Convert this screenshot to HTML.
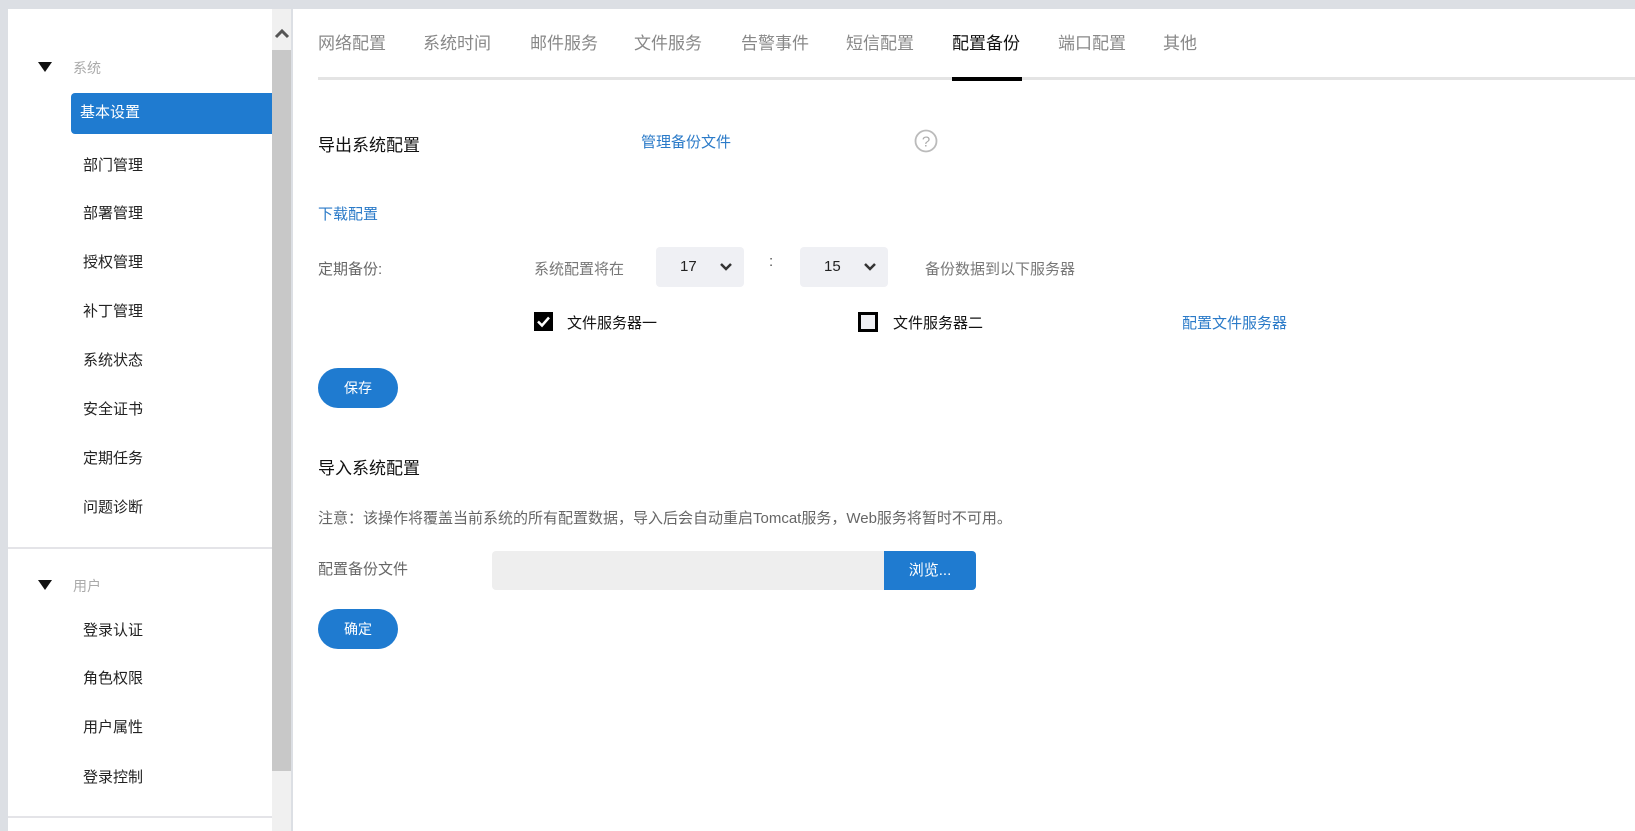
<!DOCTYPE html>
<html><head><meta charset="utf-8"><style>
*{margin:0;padding:0;box-sizing:border-box}
body{width:1635px;height:831px;overflow:hidden;background:#dcdfe4;font-family:"Liberation Sans","Noto Sans CJK SC",sans-serif;position:relative;font-size:15px;color:#333}
.a{position:absolute;white-space:nowrap}
#side{position:absolute;left:8px;top:9px;width:264px;height:822px;background:#fff}
#sb{position:absolute;left:272px;top:9px;width:19px;height:822px;background:#f0f0f0}
#thumb{position:absolute;left:272px;top:50px;width:19px;height:721px;background:#c8c8c8}
#main{position:absolute;left:293px;top:9px;width:1342px;height:822px;background:#fff}
.mi{position:absolute;left:83px;font-size:15px;color:#222;line-height:20px}
.tri{position:absolute;width:0;height:0;border-left:7px solid transparent;border-right:7px solid transparent;border-top:10px solid #111}
.tab{position:absolute;top:33px;font-size:17px;color:#888;line-height:22px}
.blue{color:#2a7ac8}
.btn{position:absolute;background:#1f7bd0;color:#fff;border-radius:20px;text-align:center;font-size:14px}
.sel{position:absolute;background:#eff0f4;border-radius:4px;width:88px;height:40px;top:247px}
.sel span{position:absolute;left:24px;top:11px;font-size:15px;color:#222}
.sel svg{position:absolute;left:64px;top:15px}
</style></head><body>
<div id="side"></div>
<div id="sb"></div><div id="thumb"></div>
<svg class="a" style="left:274px;top:27px" width="16" height="12"><path d="M2 10 L8 4 L14 10" stroke="#555" stroke-width="3" fill="none"/></svg>
<div id="main"></div>

<div class="tri" style="left:38px;top:62px"></div>
<div class="a" style="left:73px;top:58px;font-size:14px;color:#aaa">系统</div>
<div class="a" style="left:71px;top:93px;width:201px;height:41px;background:#1f7bd0;border-radius:4px 0 0 4px"></div>
<div class="mi" style="top:103px;color:#fff;left:80px">基本设置</div>
<div class="mi" style="top:156px">部门管理</div>
<div class="mi" style="top:204px">部署管理</div>
<div class="mi" style="top:253px">授权管理</div>
<div class="mi" style="top:302px">补丁管理</div>
<div class="mi" style="top:351px">系统状态</div>
<div class="mi" style="top:400px">安全证书</div>
<div class="mi" style="top:449px">定期任务</div>
<div class="mi" style="top:498px">问题诊断</div>
<div class="a" style="left:8px;top:547px;width:264px;height:2px;background:#e4e4e8"></div>
<div class="tri" style="left:38px;top:580px"></div>
<div class="a" style="left:73px;top:576px;font-size:14px;color:#aaa">用户</div>
<div class="mi" style="top:621px">登录认证</div>
<div class="mi" style="top:669px">角色权限</div>
<div class="mi" style="top:718px">用户属性</div>
<div class="mi" style="top:768px">登录控制</div>
<div class="a" style="left:8px;top:816px;width:264px;height:2px;background:#e4e4e8"></div>

<div class="tab" style="left:318px">网络配置</div>
<div class="tab" style="left:423px">系统时间</div>
<div class="tab" style="left:530px">邮件服务</div>
<div class="tab" style="left:634px">文件服务</div>
<div class="tab" style="left:741px">告警事件</div>
<div class="tab" style="left:846px">短信配置</div>
<div class="tab" style="left:952px;color:#111">配置备份</div>
<div class="tab" style="left:1058px">端口配置</div>
<div class="tab" style="left:1163px">其他</div>
<div class="a" style="left:318px;top:77px;width:1317px;height:3px;background:#e4e4e4"></div>
<div class="a" style="left:952px;top:77px;width:70px;height:4px;background:#000"></div>

<div class="a" style="left:318px;top:131px;font-size:17px;color:#111">导出系统配置</div>
<div class="a blue" style="left:641px;top:131px">管理备份文件</div>
<svg class="a" style="left:914px;top:129px" width="24" height="24"><circle cx="12" cy="12" r="10.5" stroke="#bbb" stroke-width="1.8" fill="none"/><text x="12" y="17.5" font-size="15" fill="#aaa" text-anchor="middle" font-family="Liberation Sans">?</text></svg>
<div class="a blue" style="left:318px;top:203px">下载配置</div>
<div class="a" style="left:318px;top:258px;color:#666">定期备份:</div>
<div class="a" style="left:534px;top:258px;color:#777">系统配置将在</div>
<div class="sel" style="left:656px"><span>17</span><svg width="12" height="10"><path d="M1 2 L6 7 L11 2" stroke="#333" stroke-width="2.5" fill="none"/></svg></div>
<div class="a" style="left:769px;top:253px;color:#555">:</div>
<div class="sel" style="left:800px"><span>15</span><svg width="12" height="10"><path d="M1 2 L6 7 L11 2" stroke="#333" stroke-width="2.5" fill="none"/></svg></div>
<div class="a" style="left:925px;top:258px;color:#777">备份数据到以下服务器</div>
<div class="a" style="left:534px;top:312px;width:19px;height:19px;background:#000"></div>
<svg class="a" style="left:534px;top:312px" width="19" height="19"><path d="M4 9.5 L8 13.5 L15 5.5" stroke="#fff" stroke-width="2.5" fill="none"/></svg>
<div class="a" style="left:567px;top:312px;color:#111">文件服务器一</div>
<div class="a" style="left:858px;top:312px;width:20px;height:20px;border:3px solid #000;background:#eff0f4"></div>
<div class="a" style="left:893px;top:312px;color:#111">文件服务器二</div>
<div class="a blue" style="left:1182px;top:312px">配置文件服务器</div>
<div class="btn" style="left:318px;top:368px;width:80px;height:40px;line-height:40px">保存</div>

<div class="a" style="left:318px;top:454px;font-size:17px;color:#111">导入系统配置</div>
<div class="a" style="left:318px;top:507px;color:#666">注意：该操作将覆盖当前系统的所有配置数据，导入后会自动重启Tomcat服务，Web服务将暂时不可用。</div>
<div class="a" style="left:318px;top:558px;color:#666">配置备份文件</div>
<div class="a" style="left:492px;top:551px;width:392px;height:39px;background:#eee;border-radius:4px 0 0 4px"></div>
<div class="a" style="left:884px;top:551px;width:92px;height:39px;background:#1f7bd0;border-radius:0 4px 4px 0;color:#fff;text-align:center;line-height:39px">浏览...</div>
<div class="btn" style="left:318px;top:609px;width:80px;height:40px;line-height:40px">确定</div>
</body></html>
